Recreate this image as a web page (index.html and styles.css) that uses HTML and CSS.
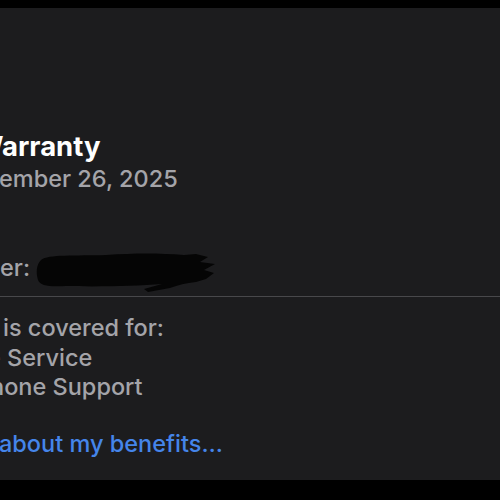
FILE: index.html
```html
<!DOCTYPE html>
<html lang="en">
<head>
<meta charset="utf-8">
<link rel="stylesheet" href="styles.css">
</head>
<body>
<div class="frame">
  <main class="panel">
    <h1 class="title">Warranty</h1>
    <p class="line date">ember 26, 2025</p>
    <div class="line serial">
      <span>er:</span>
      <svg class="redact" width="182" height="40" viewBox="0 0 182 40" aria-hidden="true">
        <path d="M5 7 C12 1 40 3 70 2 C100 0 122 0 148 2 L160 1 L172 4 L164 9 L179 11 L168 17 L178 20 L170 26 L160 29 C150 30 142 32 134 35 L112 39 L108 36 L126 31 C100 33 60 34 30 33 C14 34 4 33 2 27 C0 20 0 12 5 7 Z" fill="#050505"/>
      </svg>
    </div>
    <hr class="divider">
    <p class="line covered">is covered for:</p>
    <p class="line service">e Service</p>
    <p class="line phone">hone Support</p>
    <p class="line link">about my benefits…</p>
  </main>
</div>
</body>
</html>
```

FILE: styles.css
```css
html, body {
  margin: 0;
  padding: 0;
  background: #000;
}
.frame {
  width: 500px;
  height: 500px;
  padding-top: 8px;
  box-sizing: border-box;
  overflow: hidden;
}
.panel {
  background: #1c1c1e;
  height: 472px;
  box-sizing: border-box;
  padding-top: 120px;
  font-family: Inter, "Noto Sans", sans-serif;
  overflow: hidden;
  display: flex;
  flex-direction: column;
  align-items: flex-start;
}
.title {
  margin: 0;
  font-size: 27.5px;
  line-height: 36px;
  font-weight: 700;
  color: #ffffff;
  text-indent: -25px;
  white-space: nowrap;
}
.line {
  margin: 0;
  font-size: 23.5px;
  line-height: 29.5px;
  font-weight: 500;
  color: #a4a4a9;
  white-space: nowrap;
}
.date {
  text-indent: -1px;
}
.serial {
  margin-top: 59px;
  display: flex;
  align-items: flex-start;
  gap: 6px;
}
.redact {
  display: block;
  margin-top: 0;
  margin-bottom: -11px;
}
.divider {
  align-self: stretch;
  margin: 14px 0 0;
  border: 0;
  height: 1px;
  background: #48484b;
}
.covered {
  margin-top: 16px;
  text-indent: 3px;
}
.service {
  text-indent: -13px;
}
.phone {
  text-indent: -10px;
}
.link {
  margin-top: 27px;
  color: #4585ea;
  text-indent: -1px;
}
```
